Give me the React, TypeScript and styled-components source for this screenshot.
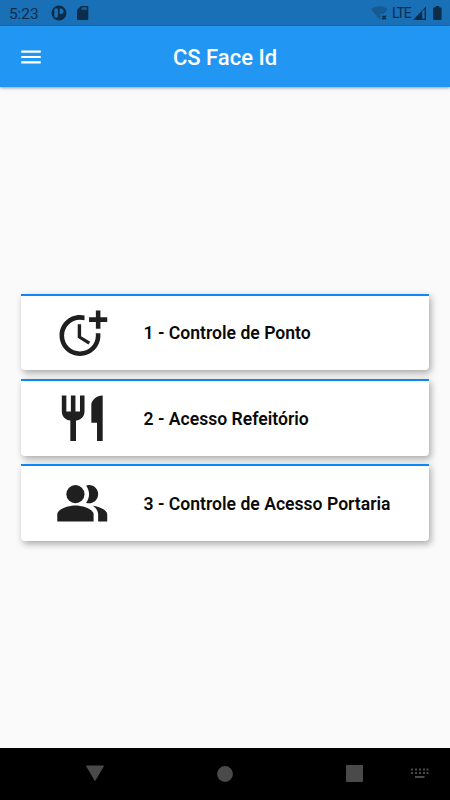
import React from 'react';
import styled, { createGlobalStyle } from 'styled-components';

const GlobalStyle = createGlobalStyle`
  * { box-sizing: border-box; }
  html, body { margin: 0; padding: 0; }
  body { font-family: Roboto, "Liberation Sans", sans-serif; background: #fafafa; }
  svg { display: block; }
`;

const Screen = styled.div`
  display: flex;
  flex-direction: column;
  width: 450px;
  height: 800px;
  overflow: hidden;
  background: #fafafa;
`;

const StatusBar = styled.div`
  flex: none;
  display: flex;
  align-items: center;
  height: 26px;
  padding: 0 8px 0 9px;
  background: #1a70b6;
  color: #0b2d49;
`;

const Clock = styled.span`
  width: 42px;
  font-size: 15.5px;
  line-height: 26px;
  padding-top: 2px;
  letter-spacing: -0.1px;
`;

const StatusIcons = styled.div`
  display: flex;
  align-items: center;
  gap: 10px;
`;

const SignalIcons = styled(StatusIcons)`
  margin-left: auto;
  gap: 0;
`;

const Network = styled.span`
  width: 21px;
  margin-left: 4px;
  font-size: 14px;
  line-height: 26px;
  letter-spacing: -1.1px;
  white-space: nowrap;
`;

const AppBar = styled.header`
  position: relative;
  z-index: 1;
  flex: none;
  display: grid;
  grid-template-columns: 62px 1fr 62px;
  align-items: center;
  height: 61px;
  background: #2196f3;
  box-shadow: 0 1px 3px rgba(0, 0, 0, 0.4);
`;

const MenuButton = styled.button`
  display: flex;
  padding: 0 0 0 18px;
  border: 0;
  background: none;
  color: #fff;
`;

const Title = styled.h1`
  margin: 0;
  text-align: center;
  color: #fff;
  font-size: 22px;
  line-height: 30px;
  font-weight: 500;
  padding-top: 3px;
`;

const Content = styled.main`
  flex: 1;
  display: flex;
  flex-direction: column;
  justify-content: center;
  gap: 8.5px;
  padding: 0 21px;
`;

const Card = styled.button`
  display: flex;
  align-items: center;
  height: 76.8px;
  padding: 0 0 0 34px;
  border: 0;
  border-top: 2px solid #0b88f5;
  border-radius: 0 0 4px 4px;
  background: #fff;
  box-shadow: 2px 3px 7px rgba(0, 0, 0, 0.33);
  color: #1f1f1f;
  font-family: inherit;
  text-align: left;
`;

const CardLabel = styled.span`
  margin-left: 34px;
  padding-top: 1px;
  color: #0a0a0a;
  font-size: 17.6px;
  line-height: 22px;
  font-weight: 600;
  white-space: nowrap;
`;

const NavBar = styled.nav`
  flex: none;
  display: flex;
  align-items: center;
  height: 52.5px;
  padding: 0 21px 0 85px;
  background: #000;
  color: #4a4a4a;
`;

const NavItem = styled.span<{ $gap?: number }>`
  margin-left: ${({ $gap = 0 }) => $gap}px;
`;

const ICONS = {
  time: [
    'M10 8v6l4.7 2.9.8-1.2-4-2.4V8z',
    'M17.92 12c.05.33.08.66.08 1 0 3.9-3.1 7-7 7s-7-3.1-7-7c0-3.9 3.1-7 7-7 .7 0 1.37.1 2 .29V4.23c-.64-.15-1.31-.23-2-.23-5 0-9 4-9 9s4 9 9 9 9-4 9-9c0-.34-.02-.67-.06-1h-2.02z',
    'M20 5V2h-2v3h-3v2h3v3h2V7h3V5z',
  ],
  meal: [
    'M11 9H9V2H7v7H5V2H3v7c0 2.12 1.66 3.84 3.75 3.97V22h2.5v-9.03C11.34 12.84 13 11.12 13 9V2h-2v7zm5-3v8h2.5v8H21V2c-2.76 0-5 2.24-5 4z',
  ],
  people: [
    'M16.67 13.13C18.04 14.06 19 15.32 19 17v3h4v-3c0-2.18-3.57-3.47-6.33-3.87z',
    'M9 4a4 4 0 1 0 0 8a4 4 0 1 0 0-8z',
    'M15 12c2.21 0 4-1.79 4-4s-1.79-4-4-4c-.47 0-.91.1-1.33.24C14.5 5.27 15 6.58 15 8s-.5 2.73-1.33 3.76c.42.14.86.24 1.33.24z',
    'M9 13c-2.67 0-8 1.34-8 4v3h16v-3c0-2.66-5.33-4-8-4z',
  ],
  menu: ['M3 18h18v-2H3v2zm0-5h18v-2H3v2zm0-7v2h18V6H3z'],
};

function Icon({ name, size }: { name: keyof typeof ICONS; size: number }) {
  return (
    <svg width={size} height={size} viewBox="0 0 24 24" fill="currentColor">
      {ICONS[name].map((d) => (
        <path key={d} d={d} />
      ))}
    </svg>
  );
}

const OPTIONS: { icon: keyof typeof ICONS; label: string }[] = [
  { icon: 'time', label: '1 - Controle de Ponto' },
  { icon: 'meal', label: '2 - Acesso Refeitório' },
  { icon: 'people', label: '3 - Controle de Acesso Portaria' },
];

export default function App() {
  return (
    <>
      <GlobalStyle />
      <Screen>
        <StatusBar>
          <Clock>5:23</Clock>
          <StatusIcons>
            <svg width="16" height="16" viewBox="0 0 16 16">
              <circle cx="8" cy="8" r="7.5" fill="currentColor" />
              <rect x="3.4" y="3.6" width="3.5" height="9" rx="1" fill="#1a70b6" />
              <path d="M8.6 3.6h1.2a2.7 2.7 0 0 1 0 5.4H8.6z" fill="#1a70b6" />
            </svg>
            <svg width="12" height="16" viewBox="0 0 12 16">
              <path d="M4 1h6.3a1 1 0 0 1 1 1v12a1 1 0 0 1-1 1H1a1 1 0 0 1-1-1V5z" fill="currentColor" />
              <path d="M4.4 2.3h5.6v2.6H4.4z" fill="#1a5d92" />
            </svg>
          </StatusIcons>
          <SignalIcons>
            <svg width="17" height="16" viewBox="0 0 17 16">
              <path d="M.3 4.2C5 .2 12 .2 16.7 4.2L12.8 9H9.6v4.2L8.5 14.4z" fill="#145a93" />
              <path d="M11.3 10.8l3.6 3.6m0-3.6l-3.6 3.6" stroke="currentColor" strokeWidth="1.6" />
            </svg>
            <Network>LTE</Network>
            <svg width="13" height="14" viewBox="0 0 13 14">
              <path d="M13 .5V14H0z" fill="currentColor" />
              <path d="M9.2 5.4l2.4-2.4v9.8H9.2z" fill="#1a70b6" />
            </svg>
            <NavItem $gap={7}>
              <svg width="9" height="14" viewBox="0 0 9 14">
                <path d="M2.6 0h3.6v1.6h1.6a.8.8 0 0 1 .8.8v10.8a.8.8 0 0 1-.8.8H.9a.8.8 0 0 1-.8-.8V2.4a.8.8 0 0 1 .8-.8h1.7z" fill="currentColor" />
              </svg>
            </NavItem>
          </SignalIcons>
        </StatusBar>
        <AppBar>
          <MenuButton aria-label="Menu">
            <Icon name="menu" size={26} />
          </MenuButton>
          <Title>CS Face Id</Title>
        </AppBar>
        <Content>
          {OPTIONS.map(({ icon, label }) => (
            <Card key={icon}>
              <Icon name={icon} size={54.5} />
              <CardLabel>{label}</CardLabel>
            </Card>
          ))}
        </Content>
        <NavBar>
          <NavItem>
            <svg width="20" height="17" viewBox="0 0 20 17">
              <path d="M1.5 1h17L10 15.5z" fill="currentColor" stroke="currentColor" strokeLinejoin="round" />
            </svg>
          </NavItem>
          <NavItem $gap={112}>
            <svg width="16" height="16" viewBox="0 0 16 16">
              <circle cx="8" cy="8" r="7.9" fill="currentColor" />
            </svg>
          </NavItem>
          <NavItem $gap={113}>
            <svg width="17" height="17" viewBox="0 0 17 17">
              <rect width="17" height="17" rx="1" fill="currentColor" />
            </svg>
          </NavItem>
          <NavItem $gap={48}>
            <svg width="18" height="11" viewBox="0 0 18 11" fill="currentColor">
              {[0, 4, 8, 12, 15.5].map((x) => (
                <React.Fragment key={x}>
                  <rect x={x} y="0.5" width="2" height="2" />
                  <rect x={x} y="4" width="2" height="2" />
                </React.Fragment>
              ))}
              <rect x="4" y="8" width="9.5" height="2" />
            </svg>
          </NavItem>
        </NavBar>
      </Screen>
    </>
  );
}
